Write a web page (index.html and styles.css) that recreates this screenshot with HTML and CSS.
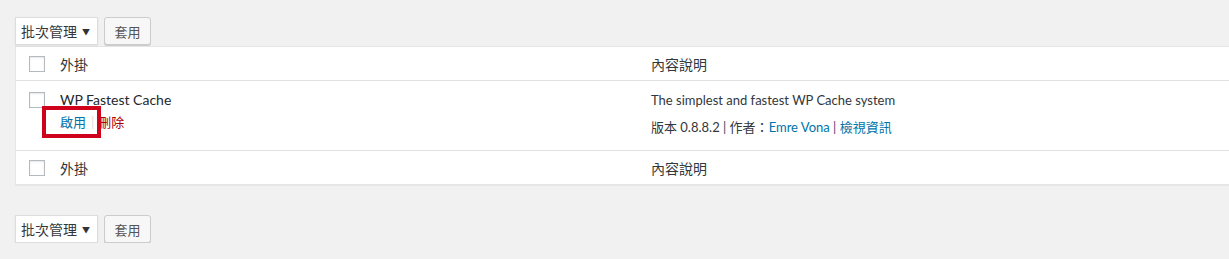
FILE: index.html
```html
<!DOCTYPE html>
<html lang="zh-Hant">
<head>
<meta charset="utf-8">
<title>外掛</title>
<link rel="stylesheet" href="styles.css">
</head>
<body>
<div class="tablenav top">
  <div class="select"><span>批次管理</span><span class="arrow">▼</span></div>
  <div class="button">套用</div>
</div>
<div class="table">
  <div class="row head">
    <div class="cb"><span class="box"></span></div>
    <div class="col">外掛</div>
    <div class="col">內容說明</div>
  </div>
  <div class="row body">
    <div class="cb"><span class="box"></span></div>
    <div class="col name">
      <div class="title">WP Fastest Cache</div>
      <div class="actions"><a class="act">啟用</a><span class="sep">|</span><a class="del">刪除</a></div>
      <div class="highlight"></div>
    </div>
    <div class="col desc">
      <div class="text">The simplest and fastest WP Cache system</div>
      <div class="meta">版本 0.8.8.2 <span class="s1">|</span> 作者：<a class="link">Emre Vona</a> <span class="s2">|</span> <a class="link">檢視資訊</a></div>
    </div>
  </div>
  <div class="row foot">
    <div class="cb"><span class="box"></span></div>
    <div class="col">外掛</div>
    <div class="col">內容說明</div>
  </div>
</div>
<div class="tablenav bottom">
  <div class="select"><span>批次管理</span><span class="arrow">▼</span></div>
  <div class="button">套用</div>
</div>
</body>
</html>
```
FILE: styles.css
```css
html, body {
  margin: 0;
  padding: 0;
  background: #f1f1f1;
}
body {
  padding-left: 15px;
  font-family: "Lato", "Noto Sans CJK TC", sans-serif;
  font-size: 13px;
  color: #444;
  overflow: hidden;
}
.tablenav {
  display: flex;
  gap: 6px;
  height: 28px;
}
.tablenav.top { margin-top: 17px; margin-bottom: 1px; }
.tablenav.bottom { margin-top: 30px; }
.select {
  box-sizing: border-box;
  width: 83px;
  height: 28px;
  background: #fff;
  border: 1px solid #ddd;
  box-shadow: 0 1px 2px rgba(0,0,0,.07);
  display: flex;
  align-items: center;
  justify-content: space-between;
  padding: 0 7px 0 5px;
  color: #32373c;
  font-size: 14px;
}
.select .arrow { font-size: 8px; color: #333; }
.button {
  box-sizing: border-box;
  width: 47px;
  height: 28px;
  background: #f7f7f7;
  border: 1px solid #ccc;
  border-radius: 3px;
  box-shadow: 0 1px 0 #ccc;
  display: flex;
  align-items: center;
  justify-content: center;
  color: #555;
  font-size: 13px;
}
.table {
  width: 1240px;
  background: #fff;
  border: 1px solid #e5e5e5;
  box-shadow: 0 1px 1px rgba(0,0,0,.04);
}
.row {
  display: grid;
  grid-template-columns: 44px 591px 1fr;
}
.head, .foot {
  height: 33px;
  align-items: center;
  color: #32373c;
  font-size: 14px;
}
.head { border-bottom: 1px solid #e1e1e1; }
.foot { border-top: 1px solid #e1e1e1; }
.cb { padding-left: 13px; display: flex; }
.box {
  box-sizing: border-box;
  width: 16px;
  height: 16px;
  border: 1px solid #b4b9be;
  background: #fff;
  box-shadow: inset 0 1px 2px rgba(0,0,0,.1);
}
.body { height: 69px; }
.body .cb { padding-top: 11px; align-items: flex-start; }
.name { position: relative; padding-top: 9px; }
.title { font-size: 14px; color: #23282d; line-height: 19px; }
.actions { margin-top: 4px; line-height: 19px; font-size: 13px; }
.act { color: #0073aa; }
.sep { color: #ddd; margin: 0 4px 0 5px; }
.del { color: #a00; }
.highlight {
  position: absolute;
  left: -18px;
  top: 25px;
  width: 59px;
  height: 32px;
  box-sizing: border-box;
  border: 4px solid #d0021b;
}
.desc { padding-top: 10px; color: #32373c; }
.desc .text { line-height: 18px; }
.desc .meta { margin-top: 9px; line-height: 18px; }
.link { color: #0073aa; }
.s1 { color: #3a4a5a; }
.s2 { color: #5a3f78; }
```
